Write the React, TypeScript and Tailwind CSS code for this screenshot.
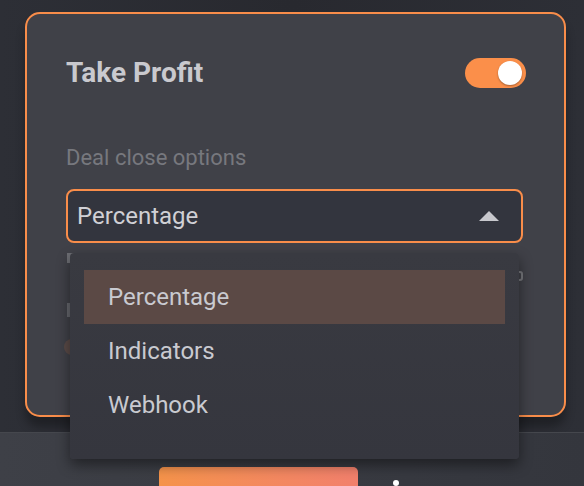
import { useState } from "react";

const options = ["Percentage", "Indicators", "Webhook"];

function Toggle({ on }: { on: boolean }) {
  return (
    <div
      className={
        "flex h-[30px] w-[61px] items-center rounded-full px-[4px] " +
        (on ? "justify-end bg-[#fb8f4a]" : "justify-start bg-[#55565d]")
      }
    >
      <div className="h-[24px] w-[24px] rounded-full bg-white shadow-[0_1px_2px_rgba(0,0,0,0.35)]" />
    </div>
  );
}

export default function App() {
  const [selected] = useState("Percentage");

  return (
    <div className="relative h-[486px] w-[584px] overflow-hidden bg-[#2a2b31] font-['Roboto',sans-serif]">
      <div className="h-[432px] bg-gradient-to-r from-[#2d2f36] via-[#28292f] to-[#2d2f36] pl-[25px] pr-[18px] pt-[12px]">
        <div className="h-[405px] rounded-[15px] border-2 border-[#f98d4a] bg-[#404148] pl-[39px] pr-[41px] pt-[41px] shadow-[0_10px_10px_rgba(0,0,0,0.3)]">
          <div className="flex items-center justify-between">
            <h2 className="text-[28px] font-bold leading-[36px] text-[#c9c9ce]">Take Profit</h2>
            <div className="-mr-[3px]">
              <Toggle on />
            </div>
          </div>

          <p className="mt-[54px] text-[22px] leading-[26px] text-[#77787e]">Deal close options</p>

          <div className="mt-[18px] flex h-[54px] items-center justify-between rounded-[8px] border-2 border-[#f98d4a] bg-[#33353e] pl-[9px] pr-[22px]">
            <span className="text-[24px] text-[#d0d0d5]">{selected}</span>
            <svg width="20" height="10" viewBox="0 0 20 10">
              <path d="M10 0 L20 10 L0 10 Z" fill="#c8c8cd" />
            </svg>
          </div>

          {/* fields hidden behind the open menu: only their edges peek out */}
          <div className="mt-[10px] flex items-start justify-between">
            <div className="ml-[1px] h-[10px] w-[40px] bg-[#6c6d73]" />
            <div className="mt-[18px] h-[10px] w-[8px] rounded-[3px] border-2 border-[#77787d]" />
          </div>
          <div className="mt-[22px] ml-[1px] h-[14px] w-[40px] bg-[#66676d]" />
          <div className="mt-[22px] -ml-[2px] h-[16px] w-[16px] rounded-full bg-[#5a4a47]" />
        </div>
      </div>

      <div className="flex h-[54px] border-t border-[#45474d] bg-gradient-to-r from-[#3e4047] to-[#34363d] pl-[159px] pt-[34px]">
        <div className="h-[30px] w-[199px] rounded-t-[5px] bg-gradient-to-r from-[#f5934a] to-[#f2806c]" />
        <div className="ml-[35px] mt-[13px] h-[6px] w-[6px] rounded-full bg-white" />
      </div>

      <ul className="absolute left-[70px] top-[253px] h-[206px] w-[449px] rounded-[4px] bg-gradient-to-b from-[#393a41] to-[#35363e] px-[14px] pt-[17px] shadow-[0_6px_14px_rgba(0,0,0,0.45)]">
        {options.map((o) => (
          <li
            key={o}
            className={
              "flex h-[54px] items-center pl-[24px] text-[24px] text-[#c9cad0] " +
              (o === selected ? "bg-[#5b4945]" : "")
            }
          >
            {o}
          </li>
        ))}
      </ul>
    </div>
  );
}
